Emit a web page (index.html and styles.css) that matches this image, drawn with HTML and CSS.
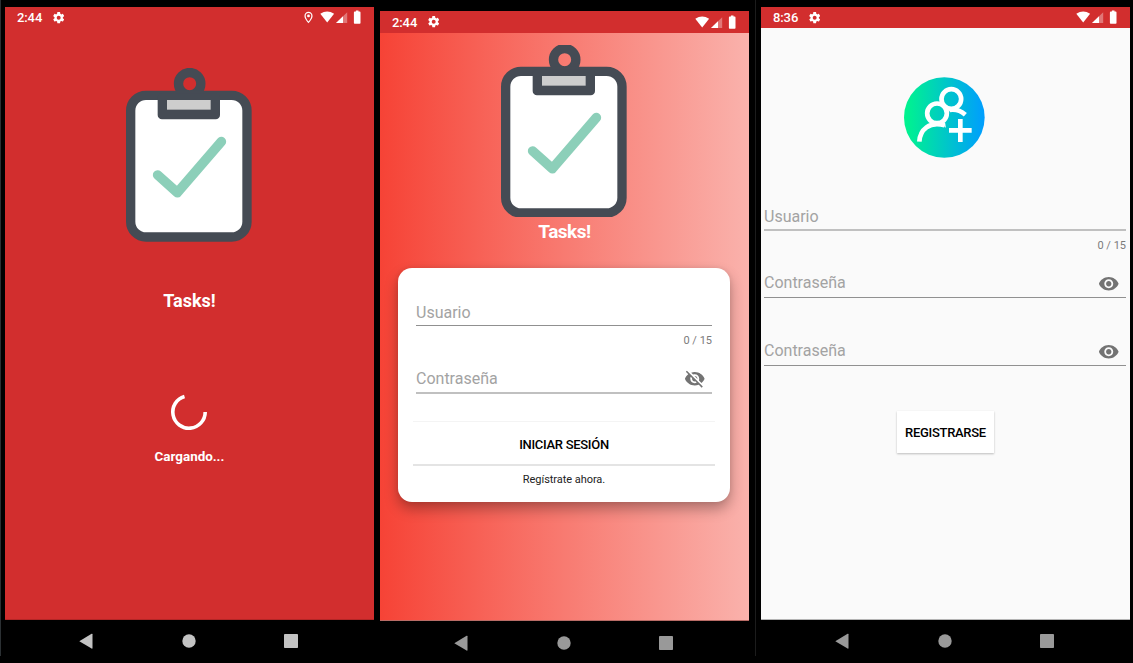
FILE: index.html
```html
<!DOCTYPE html>
<html lang="es">
<head>
<meta charset="utf-8">
<title>Tasks!</title>
<link rel="stylesheet" href="styles.css">
</head>
<body>
<svg class="defs" width="0" height="0">
  <defs>
    <symbol id="gear" viewBox="0 0 24 24"><path d="M19.43 12.98c.04-.32.07-.64.07-.98s-.03-.66-.07-.98l2.11-1.65c.19-.15.24-.42.12-.64l-2-3.46c-.12-.22-.39-.3-.61-.22l-2.49 1c-.52-.4-1.08-.73-1.69-.98l-.38-2.65C14.46 2.18 14.25 2 14 2h-4c-.25 0-.46.18-.49.42l-.38 2.65c-.61.25-1.17.59-1.69.98l-2.49-1c-.23-.09-.49 0-.61.22l-2 3.46c-.13.22-.07.49.12.64l2.11 1.65c-.04.32-.07.65-.07.98s.03.66.07.98l-2.11 1.65c-.19.15-.24.42-.12.64l2 3.46c.12.22.39.3.61.22l2.49-1c.52.4 1.08.73 1.69.98l.38 2.65c.03.24.24.42.49.42h4c.25 0 .46-.18.49-.42l.38-2.65c.61-.25 1.17-.59 1.69-.98l2.49 1c.23.09.49 0 .61-.22l2-3.46c.12-.22.07-.49-.12-.64l-2.11-1.65zM12 15.5c-1.93 0-3.5-1.57-3.5-3.5s1.57-3.5 3.5-3.5 3.5 1.57 3.5 3.5-1.57 3.5-3.5 3.5z"/></symbol>
    <symbol id="signals" viewBox="0 0 44 21">
      <path d="M.3 6.700Q7.200 2.200 14.100 6.700L7.200 15.400Z"/>
      <path d="M27.200 5.300V16H16Z" opacity=".35"/>
      <path d="M23 9.300V16H16Z"/>
      <path d="M34.700 4.600h1.200v-1h2.600v1h1.200q.8 0 .8.8v10.500q0 .8-.8.800h-5q-.8 0-.8-.8V5.400q0-.8.800-.8z"/>
    </symbol>
    <symbol id="board" viewBox="378 204 378 522" overflow="visible">
      <circle cx="569" cy="251" r="33.5" fill="none" stroke="#454b54" stroke-width="28"/>
      <rect x="392" y="286" width="349" height="425" rx="46" fill="#fff" stroke="#454b54" stroke-width="28"/>
      <rect x="473" y="280" width="187" height="78" rx="13" fill="#454b54"/>
      <rect x="501" y="300" width="131" height="29" fill="#cdcdcd"/>
      <path d="M473 525L532 578L664 425" fill="none" stroke="#8ccfb9" stroke-width="29" stroke-linecap="round" stroke-linejoin="round"/>
    </symbol>
    <symbol id="eye" viewBox="0 0 24 24"><path d="M12 4.500C7 4.500 2.730 7.610 1 12c1.730 4.390 6 7.500 11 7.500s9.270-3.110 11-7.500c-1.730-4.390-6-7.500-11-7.500zM12 17c-2.760 0-5-2.240-5-5s2.240-5 5-5 5 2.240 5 5-2.240 5-5 5zm0-8c-1.660 0-3 1.340-3 3s1.340 3 3 3 3-1.340 3-3-1.340-3-3-3z"/></symbol>
    <symbol id="eye-off" viewBox="0 0 24 24"><path d="M12 7c2.760 0 5 2.240 5 5 0 .65-.13 1.260-.36 1.830l2.920 2.920c1.510-1.260 2.700-2.890 3.430-4.750-1.730-4.390-6-7.500-11-7.500-1.400 0-2.740.250-3.980.700l2.160 2.160C10.740 7.130 11.350 7 12 7zM2 4.270l2.280 2.280.460.460C3.080 8.300 1.780 10.020 1 12c1.730 4.390 6 7.500 11 7.500 1.550 0 3.030-.300 4.380-.840l.420.420L19.730 22 21 20.730 3.270 3 2 4.270zM7.530 9.800l1.550 1.550c-.05.210-.08.430-.08.650 0 1.660 1.340 3 3 3 .220 0 .440-.030.650-.080l1.550 1.550c-.670.330-1.410.530-2.200.530-2.760 0-5-2.240-5-5 0-.790.200-1.530.530-2.200zm4.310-.780l3.150 3.150.020-.160c0-1.660-1.340-3-3-3l-.170.010z"/></symbol>
    <symbol id="nav" viewBox="0 0 369 43">
      <path d="M74.300 21.200L86.600 13.800Q87.500 13.300 87.500 14.300V28.100Q87.500 29.100 86.600 28.600Z"/>
      <circle cx="184" cy="21" r="6.700"/>
      <rect x="279" y="14" width="14" height="14" rx=".8"/>
    </symbol>
  </defs>
</svg>
<main class="stage">
  <div class="edge"></div>

  <section class="phone splash">
    <div class="screen">
      <header class="status">
        <span class="time">2:44</span><svg class="gear"><use href="#gear"/></svg>
        <svg class="pin" viewBox="0 0 24 24"><path d="M12 1.500c-4.200 0-7.500 3.300-7.500 7.500 0 5.500 7.500 13.500 7.500 13.500s7.500-8 7.500-13.500c0-4.200-3.300-7.500-7.500-7.500zm0 17.800C10 16.800 6.800 12.300 6.800 9a5.200 5.200 0 0 1 10.400 0c0 3.300-3.200 7.800-5.200 10.300z"/><circle cx="12" cy="9" r="2.600"/></svg>
        <svg class="signals"><use href="#signals"/></svg>
      </header>
      <svg class="board"><use href="#board"/></svg>
      <h1 class="title">Tasks!</h1>
      <svg class="spinner" viewBox="0 0 40 40"><path d="M36.200 20A16.200 16.200 0 1 1 15.500 4.430" fill="none" stroke="#fff" stroke-width="3.600"/></svg>
      <p class="loading">Cargando...</p>
    </div>
    <svg class="nav"><use href="#nav"/></svg>
  </section>

  <section class="phone login">
    <div class="screen">
      <header class="status">
        <span class="time">2:44</span><svg class="gear"><use href="#gear"/></svg>
        <svg class="signals"><use href="#signals"/></svg>
      </header>
      <svg class="board" viewBox="0 1 126 172"><use href="#board" width="126" height="174"/></svg>
      <h1 class="title">Tasks!</h1>
      <div class="card">
        <div class="field">Usuario</div>
        <div class="counter">0 / 15</div>
        <div class="field soft">Contraseña<svg class="eye"><use href="#eye-off"/></svg></div>
        <div class="submit">INICIAR SESIÓN</div>
        <div class="register">Regístrate ahora.</div>
      </div>
    </div>
    <svg class="nav"><use href="#nav"/></svg>
  </section>

  <div class="divider"></div>

  <section class="phone signup">
    <div class="screen">
      <header class="status">
        <span class="time">8:36</span><svg class="gear"><use href="#gear"/></svg>
        <svg class="signals"><use href="#signals"/></svg>
      </header>
      <svg class="avatar" viewBox="42 36 243 243">
        <defs><linearGradient id="mint"><stop offset="0" stop-color="#00f58c"/><stop offset="1" stop-color="#009dff"/></linearGradient></defs>
        <circle cx="163" cy="157.500" r="121" fill="url(#mint)"/>
        <g fill="none" stroke="#fff" stroke-width="14">
          <circle cx="184" cy="102" r="29.500"/>
          <circle cx="141" cy="145" r="29.500"/>
          <path d="M88 230C90 194 118 168 164 181M178 135Q204 130 226 149"/>
          <path d="M158 172L166 187L165 176Z" stroke-width="2" fill="#fff"/>
          <path d="M211 162V231M177 196H245"/>
        </g>
      </svg>
      <div class="form">
        <div class="field soft">Usuario</div>
        <div class="counter">0 / 15</div>
        <div class="field">Contraseña<svg class="eye"><use href="#eye"/></svg></div>
        <div class="field">Contraseña<svg class="eye"><use href="#eye"/></svg></div>
      </div>
      <div class="button">REGISTRARSE</div>
    </div>
    <svg class="nav"><use href="#nav"/></svg>
  </section>
</main>
</body>
</html>
```

FILE: styles.css
```css
* { box-sizing: border-box; }
body { margin: 0; background: #000; font-family: Roboto, sans-serif; overflow: hidden; }
svg { display: block; flex: none; }
.defs { position: absolute; }
.stage { display: flex; width: 1133px; height: 663px; }
.edge { width: 1px; height: 656px; margin-right: 4px; background: #2b3033; }
.divider { width: 1px; height: 656px; margin: 0 5px; background: #1c1c1c; }
.phone { width: 369px; flex: none; padding-top: 7px; }
.login { padding-top: 11px; margin-left: 6px; }
.screen { height: 613px; display: flex; flex-direction: column; align-items: center; border-bottom: 1px solid #b32626; }
.login .screen { height: 610px; background: linear-gradient(90deg, #f64336, #fab2ac); border-bottom-color: #b96c66; }
.splash .screen { background: #d22e2e; }
.signup .screen { background: #fafafa; border-bottom-color: #b4b4b4; }
.login + .divider { margin-left: 6px; }

.status { align-self: stretch; height: 21px; flex: none; padding: 0 10px 0 12px; display: flex; align-items: center; background: #d22e2e; color: #fff; fill: #fff; }
.login .status { height: 22px; }
.time { font-size: 13px; font-weight: 500; letter-spacing: -.1px; line-height: 21px; width: 35px; }
.gear { width: 13.400px; height: 13.400px; }
.signals { width: 44px; height: 21px; margin-left: auto; }
.pin { width: 13px; height: 13px; margin-left: auto; margin-right: 5px; }
.pin + .signals { margin-left: 0; }

.board { width: 126px; height: 174px; margin: 40px 2px 0 0; }
.login .board { height: 172px; margin-top: 12px; }
.title { margin: 47px 0 0; color: #fff; font-size: 18px; font-weight: 700; line-height: 24px; }
.login .title { margin-top: 3px; font-size: 19px; font-weight: 700; letter-spacing: -.5px; }
.spinner { width: 40px; height: 40px; margin: 79px 1px 0 0; }
.loading { margin: 15px 0 0; color: #fff; font-size: 13.400px; font-weight: 700; line-height: 20px; }

.card { width: 332px; height: 234px; margin: 24px 1px 0 0; padding: 32px 18px 0; border-radius: 14px; background: #fff; box-shadow: 0 7px 14px rgba(0, 0, 0, .3), 0 0 5px rgba(0, 0, 0, .08); }
.field { display: flex; align-items: center; justify-content: space-between; height: 26px; border-bottom: 1px solid #909090; color: #a3a3a3; font-size: 16px; line-height: 25px; }
.field.soft { height: 27px; border-bottom: 2px solid #c0c0c0; }
.counter { margin-top: 8px; color: #7b7b7b; font-size: 11px; line-height: 14px; text-align: right; }
.card .counter + .field { margin-top: 18px; height: 28px; padding-bottom: 2px; }
.eye { width: 21.500px; height: 21.500px; margin: 2px 7px 0 0; fill: #737373; }
.submit { height: 45px; margin: 27px -3px 0; border-top: 1px solid #f4f4f4; border-bottom: 2px solid #e4e4e4; color: #000; font-size: 13px; font-weight: 500; letter-spacing: -.3px; line-height: 45px; text-align: center; }
.register { margin-top: 7px; color: #222; font-size: 11px; letter-spacing: -.05px; line-height: 14px; text-align: center; }

.avatar { width: 81px; height: 81px; margin: 49px 2px 0 0; }
.form { align-self: stretch; margin: 46px 4px 0 3px; }
.form .counter { margin-top: 8px; }
.form .counter + .field { margin-top: 17px; height: 28px; padding-bottom: 2px; }
.form .field + .field { margin-top: 40px; height: 28px; padding-bottom: 2px; }
.button { width: 97px; height: 42px; margin-top: 45px; background: #fff; box-shadow: 0 1px 2px rgba(0, 0, 0, .25); color: #000; font-size: 13px; font-weight: 500; letter-spacing: -.3px; line-height: 43px; text-align: center; }

.nav { width: 369px; height: 43px; fill: #999; }
.login .nav { margin-top: 1px; }
.splash .nav { fill: #c3c3c3; }
```
